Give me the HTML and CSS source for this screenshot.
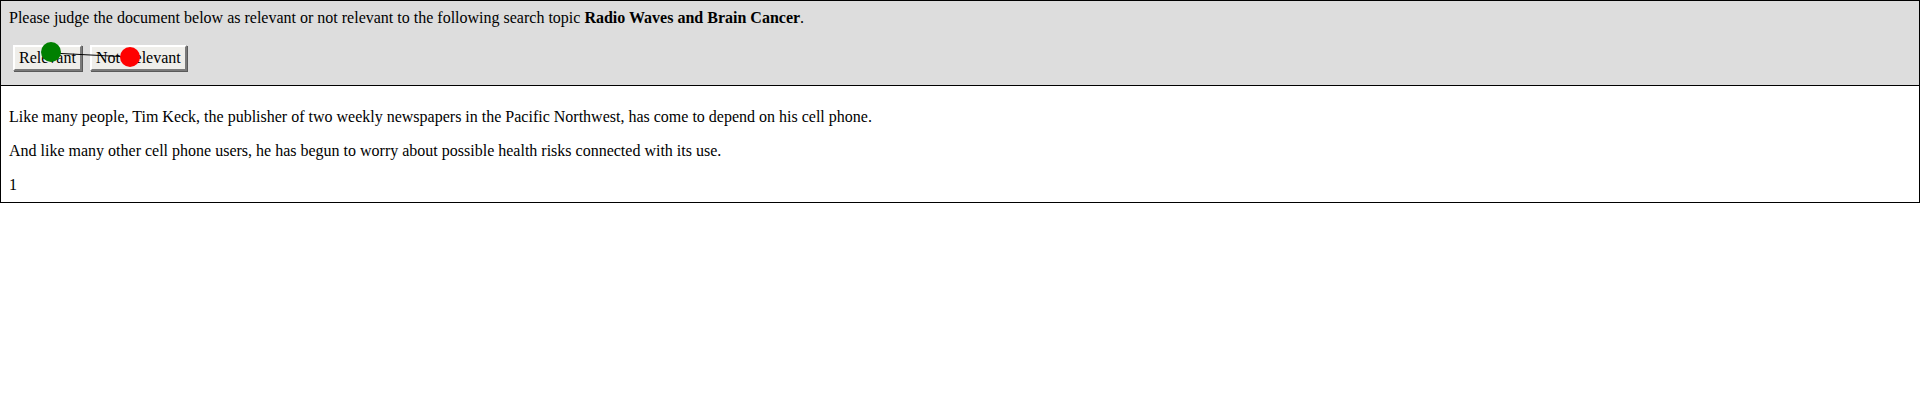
FILE: index.html
```html
<!DOCTYPE html>
<html lang="en">
<head>
<meta charset="utf-8">
<title>Relevance judgement</title>
<link rel="stylesheet" href="styles.css">
</head>
<body>
<div class="judge">
  <div class="topic">Please judge the document below as relevant or not relevant to the following search topic <b>Radio Waves and Brain Cancer</b>.</div>
  <div class="actions">
    <button class="btn" type="button">Relevant</button>
    <button class="btn" type="button">Not Relevant</button>
  </div>
  <svg class="marks" width="200" height="90" viewBox="0 0 200 90">
    <line x1="51" y1="53" x2="130" y2="57" stroke="#000" stroke-width="1"/>
    <circle cx="51" cy="52" r="10" fill="#008000"/>
    <circle cx="130" cy="57" r="10" fill="#ff0000"/>
  </svg>
</div>
<div class="doc">
  <p>Like many people, Tim Keck, the publisher of two weekly newspapers in the Pacific Northwest, has come to depend on his cell phone.</p>
  <p>And like many other cell phone users, he has begun to worry about possible health risks connected with its use.</p>
  <p>1</p>
</div>
</body>
</html>
```
FILE: styles.css
```css
html, body {
  margin: 0;
  padding: 0;
  background: #fff;
}
body {
  font-family: "Liberation Serif", "Times New Roman", serif;
  font-size: 16px;
  line-height: 18px;
  color: #000;
}
.judge {
  position: relative;
  background: #dddddd;
  border: 1px solid #000;
  padding: 8px 8px 14px 8px;
}
.topic {
  margin: 0;
}
.actions {
  display: flex;
  gap: 8px;
  margin: 18px 0 0 4px;
}
.btn {
  font-family: "Liberation Serif", "Times New Roman", serif;
  font-size: 16px;
  height: 26px;
  padding: 0 4px;
  background: #efeeea;
  color: #000;
  border: 2px solid;
  border-color: #ffffff #7a7a7a #7a7a7a #ffffff;
  box-shadow: 1px 1px 0 #5a5a5a;
  border-radius: 0;
}
.marks {
  position: absolute;
  left: -1px;
  top: -1px;
  pointer-events: none;
}
.doc {
  border: 1px solid #000;
  border-top: 0;
  padding: 6px 8px 8px 8px;
}
.doc p {
  margin: 16px 0 0 0;
}
```
